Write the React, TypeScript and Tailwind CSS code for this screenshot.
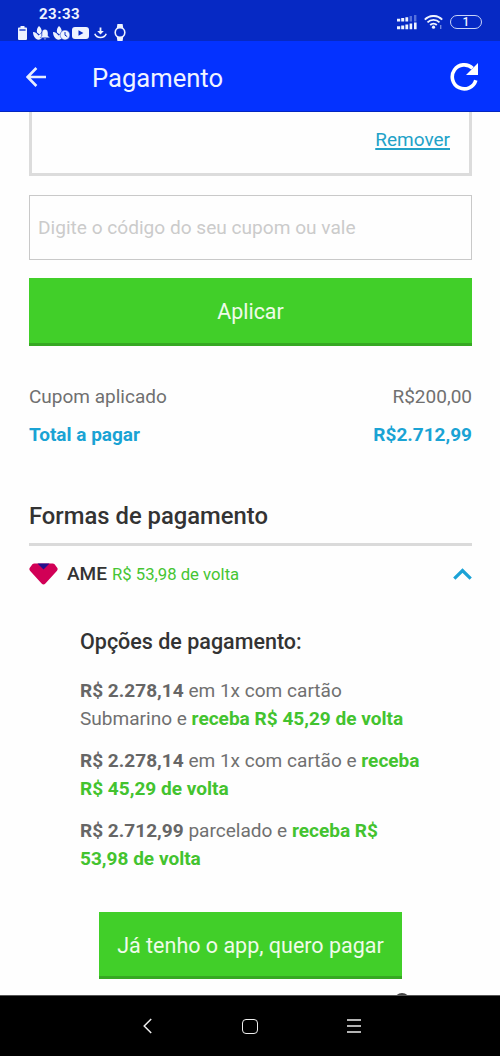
import React from 'react';

function FlameBase() {
  return (
    <g fill="currentColor">
      <path d="M6 0C7.8 1.8 9 3.6 8.6 6L6.6 8.6L4 6.4C3.4 3.8 4.4 1.6 6 0Z" />
      <path d="M0 6C2.4 6.2 4.2 7.6 5.6 9.6L8.6 7V12.6C7 14.2 4.4 14 2.6 12.4C0.8 10.8 0 8.6 0 6Z" />
    </g>
  );
}

function StatusBar() {
  return (
    <div className="flex h-[41px] shrink-0 items-start justify-between bg-[#0629c4] text-[#eef3ff]">
      <div className="flex flex-col pt-[5px]">
        <span className="h-[19px] pl-[39px] text-[15px] leading-[19px] font-bold tracking-[0.5px]">23:33</span>
        <div className="flex h-[17px] items-center pl-[18px]">
          {/* Battery */}
          <svg className="h-[14px] w-[9px]" viewBox="0 0 9 14">
            <path d="M2.5 0H6.5V1.6H8.2Q9 1.6 9 2.5V13Q9 14 8 14H1Q0 14 0 13V2.5Q0 1.6 0.8 1.6H2.5Z" fill="currentColor" />
            <path d="M1.4 4H7.6" stroke="#0629c4" strokeWidth="1.3" />
          </svg>
          {/* Flame with bell */}
          <svg className="ml-[6px] h-[14px] w-[17px]" viewBox="0 0 17 14">
            <FlameBase />
            <path
              d="M12 3.2C14.2 3.4 15 5.1 15 7V9.8L17 11.8H7L9 9.8V7C9 5.1 9.8 3.4 12 3.2ZM10.6 12.3H13.4Q12.8 13.7 12 13.7T10.6 12.3Z"
              fill="currentColor"
              stroke="#0629c4"
              strokeWidth="0.4"
            />
          </svg>
          {/* Flame with clock */}
          <svg className="ml-[3px] h-[14px] w-[17px]" viewBox="0 0 17 14">
            <FlameBase />
            <circle cx="12" cy="9" r="4.9" fill="currentColor" stroke="#0629c4" strokeWidth="0.5" />
            <path d="M12 6V9.2L14.2 10.6" fill="none" stroke="#0629c4" strokeWidth="1" />
          </svg>
          {/* Video */}
          <svg className="ml-[2px] h-[12px] w-[17px]" viewBox="0 0 17 12">
            <rect width="17" height="12" rx="3" fill="currentColor" />
            <path d="M6.5 3.3L11.4 6L6.5 8.7Z" fill="#0629c4" />
          </svg>
          {/* Download */}
          <svg className="ml-[5px] h-[12px] w-[13px]" viewBox="0 0 13 12" fill="none" stroke="currentColor">
            <path d="M6.5 0.5V5" strokeWidth="1.8" />
            <path d="M3.2 4H9.8L6.5 7.6Z" fill="currentColor" stroke="none" />
            <path d="M0.8 6.8C2.6 11.7 10.4 11.7 12.2 6.8" strokeWidth="1.6" />
          </svg>
          {/* Watch */}
          <svg className="ml-[7px] h-[17px] w-[12px]" viewBox="0 0 12 17">
            <path d="M3.4 0H8.6L9.4 5H2.6ZM2.6 12H9.4L8.6 17H3.4Z" fill="currentColor" />
            <circle cx="6" cy="8.5" r="4.8" fill="#0629c4" stroke="currentColor" strokeWidth="1.6" />
          </svg>
        </div>
      </div>

      <div className="mt-[15px] flex h-[14px] items-center pr-[18px]">
        {/* Dual SIM signal */}
        <svg className="h-[15px] w-[20px]" viewBox="0 0 20 15">
          <path d="M0 3.8H3.2V6.4H0ZM4.2 3H7.2V6.4H4.2ZM8.4 2.2H11.2V6.4H8.4Z" fill="currentColor" />
          <path d="M12.6 1H15V6.4H12.6ZM17 0H19.4V6.4H17Z" fill="#5570dc" />
          <path d="M0 11.2H3.2V14.2H0ZM4.2 10.4H7.2V14.2H4.2ZM8.4 9.6H11.2V14.2H8.4ZM12.6 8.6H15.2V14.2H12.6ZM17 7.6H19.6V14.2H17Z" fill="currentColor" />
        </svg>
        {/* Wifi */}
        <svg className="ml-[7px] h-[14px] w-[19px]" viewBox="0 0 19 14" fill="none" stroke="currentColor" strokeWidth="1.9">
          <path d="M0.8 4.6C5.6 -0.3 13.4 -0.3 18.2 4.6" />
          <path d="M3.5 7.3C6.8 4 12.2 4 15.5 7.3" />
          <path d="M6.2 10C8 8.3 11 8.3 12.8 10" />
          <circle cx="9.5" cy="12.2" r="1.6" fill="currentColor" stroke="none" />
          <path d="M16.7 10V14" stroke="#7188e4" strokeWidth="1.4" />
        </svg>
        <span className="ml-[7px] flex h-[14px] w-[32px] items-center justify-center rounded-full border-[1.5px] border-[#c9d4f8] text-[12px] leading-none font-medium">
          1
        </span>
      </div>
    </div>
  );
}

function Header() {
  return (
    <header className="flex h-[71px] shrink-0 items-center border-b border-[#0326c0] bg-[#0432ff] pt-[2px] text-white">
      <svg className="ml-[26px] h-[20px] w-[20px]" viewBox="0 0 20 20" fill="none" stroke="#e6edff" strokeWidth="2.6">
        <path d="M20 10H1.8M10.4 1L1.6 10L10.4 19" />
      </svg>
      <h1 className="mt-[2px] ml-[46px] text-[25.6px] leading-[32px] font-normal text-[#f0f4ff]">Pagamento</h1>
      <svg className="mr-[21px] mb-[2px] ml-auto h-[29px] w-[29px]" viewBox="0 0 29 29">
        <path d="M25.8 18.2A12 12 0 1 1 22.6 6.2" fill="none" stroke="white" strokeWidth="3.6" />
        <path d="M28 1V13H16Z" fill="white" />
      </svg>
    </header>
  );
}

const options = [
  { price: 'R$ 2.278,14', text: ' em 1x com cartão Submarino e ', cashback: 'receba R$ 45,29 de volta' },
  { price: 'R$ 2.278,14', text: ' em 1x com cartão e ', cashback: 'receba R$ 45,29 de volta' },
  { price: 'R$ 2.712,99', text: ' parcelado e ', cashback: 'receba R$ 53,98 de volta' }
];

function Content() {
  return (
    <main className="relative flex h-[883px] flex-col overflow-hidden bg-[#fefefe] pr-[28px] pl-[29px]">
      {/* Applied coupon */}
      <div className="flex h-[64px] shrink-0 items-start justify-end border-x-[3px] border-b-[3px] border-[#dcdcdc] pt-[16px] pr-[19px]">
        <a className="text-[19px] leading-[24px] text-[#22a2c8] underline decoration-[1.5px] underline-offset-[2px]">Remover</a>
      </div>

      <input
        className="mt-[19px] h-[65px] shrink-0 border-[1.5px] border-[#c9c9c9] px-[8px] text-[19.1px] placeholder:text-[#cbcbcb]"
        placeholder="Digite o código do seu cupom ou vale"
      />

      <button className="mt-[18px] h-[68px] shrink-0 border-b-[3px] border-[#36a822] bg-[#41cf29] pt-[4px] text-[21.4px] text-[#effbe9]">
        Aplicar
      </button>

      {/* Totals */}
      <div className="mt-[32px] flex h-[38px] shrink-0 items-center justify-between text-[19px] text-[#707070]">
        <span>Cupom aplicado</span>
        <span>R$200,00</span>
      </div>
      <div className="flex h-[38px] shrink-0 items-center justify-between text-[19px] font-bold text-[#1aa3d4]">
        <span>Total a pagar</span>
        <span>R$2.712,99</span>
      </div>

      {/* Payment methods */}
      <h2 className="mt-[43px] h-[49px] shrink-0 border-b-[3px] border-[#dadada] text-[23.8px] leading-[38px] font-medium text-[#333]">
        Formas de pagamento
      </h2>
      <div className="mt-[13px] flex h-[30px] shrink-0 items-center">
        <svg className="h-[22px] w-[29px]" viewBox="0 0 29 22">
          <path d="M5.4 0.4H23.6Q24.8 0.4 25.6 1.2L28 4.4Q29.4 6.2 27.8 7.9L16.4 20.5Q14.5 22.4 12.6 20.5L1.2 7.9Q-0.4 6.2 1 4.4L3.4 1.2Q4.2 0.4 5.4 0.4Z" fill="#d10056" />
          <path d="M8.5 0.4H20.5L14.5 6.6Z" fill="#24108c" />
        </svg>
        <span className="ml-[9px] pt-px text-[19px] font-medium text-[#333]">AME</span>
        <span className="ml-[5px] pt-px text-[16.7px] text-[#45c532]">R$ 53,98 de volta</span>
        <svg className="ml-auto h-[12px] w-[19px]" viewBox="0 0 19 12" fill="none" stroke="#1ba2d6" strokeWidth="3.2">
          <path d="M1.3 10.7L9.5 2.5L17.7 10.7" />
        </svg>
      </div>

      <section className="mt-[38px] ml-[51px] w-[343px] text-[19.06px] leading-[28.3px] text-[#707070]">
        <h3 className="mb-[20px] text-[21.5px] leading-[30px] font-medium text-[#333]">Opções de pagamento:</h3>
        {options.map((option, i) => (
          <p key={i} className="mb-[13.3px]">
            <b className="text-[#666]">{option.price}</b>
            {option.text}
            <b className="text-[#43c32f]">{option.cashback}</b>
          </p>
        ))}
      </section>

      <button className="mt-[25px] ml-[70px] h-[67px] w-[303px] shrink-0 border-b-[3px] border-[#36a822] bg-[#41cf29] pt-[5px] text-[21.5px] text-[#effbe9]">
        Já tenho o app, quero pagar
      </button>

      {/* Top of the floating control behind the navigation bar */}
      <span className="absolute -bottom-[14px] left-[394px] size-[16px] rounded-full bg-[#444]" />
    </main>
  );
}

function NavigationBar() {
  return (
    <nav className="flex h-[61px] shrink-0 items-center border-t border-[#555] bg-black pl-[143px] text-[#eee]">
      <svg className="h-[16px] w-[9px]" viewBox="0 0 9 16" fill="none" stroke="currentColor" strokeWidth="1.5">
        <path d="M8.2 1L1.2 8L8.2 15" />
      </svg>
      <span className="ml-[90px] h-[15px] w-[16px] rounded-[4px] border-[1.5px] border-current" />
      <svg className="ml-[89px] h-[14px] w-[14px]" viewBox="0 0 14 14" stroke="currentColor" strokeWidth="1.4">
        <path d="M0 1H14M0 7H14M0 13H14" />
      </svg>
    </nav>
  );
}

export default function App() {
  return (
    <div className="flex h-[1056px] w-[500px] flex-col overflow-hidden bg-white font-['Roboto',sans-serif]">
      <StatusBar />
      <Header />
      <Content />
      <NavigationBar />
    </div>
  );
}
